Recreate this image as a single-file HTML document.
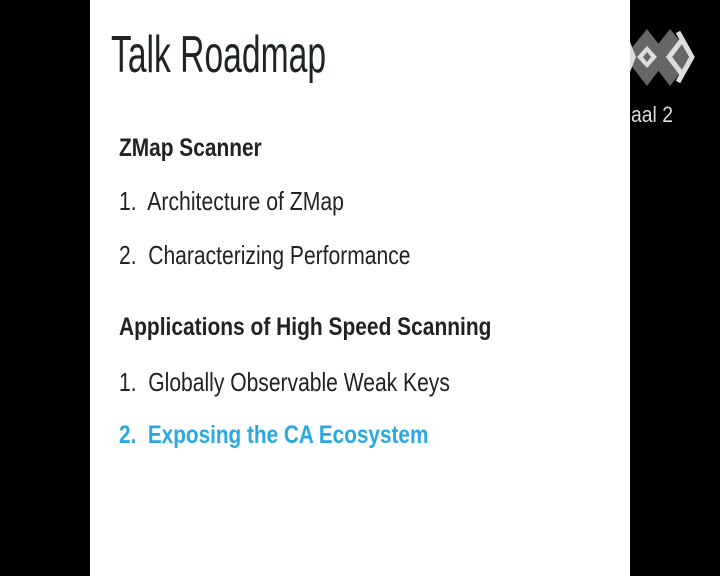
<!DOCTYPE html>
<html><head><style>
body{margin:0;width:720px;height:576px;background:#000;position:relative;overflow:hidden;font-family:"Liberation Sans",sans-serif}
.slide{position:absolute;left:90px;top:0;width:540px;height:576px;background:#fff}
.t{position:absolute;left:0;white-space:nowrap;transform-origin:0 0;color:#222}
</style></head><body>
<div class="slide"></div>
<div class="t" style="left:111px;top:25px;font-size:52px;transform:scaleX(0.647);color:#1e2426">Talk Roadmap</div>
<div class="t" style="left:119px;top:134px;font-size:25px;font-weight:bold;transform:scaleX(0.835)">ZMap Scanner</div>
<div class="t" style="left:119px;top:186px;font-size:26px;transform:scaleX(0.815)">1.&nbsp; Architecture of ZMap</div>
<div class="t" style="left:119px;top:240px;font-size:26px;transform:scaleX(0.81)">2.&nbsp; Characterizing Performance</div>
<div class="t" style="left:119px;top:313px;font-size:25px;font-weight:bold;transform:scaleX(0.838)">Applications of High Speed Scanning</div>
<div class="t" style="left:119px;top:367px;font-size:26px;transform:scaleX(0.81)">1.&nbsp; Globally Observable Weak Keys</div>
<div class="t" style="left:119px;top:421px;font-size:25px;font-weight:bold;transform:scaleX(0.83);color:#2aa8e0">2.&nbsp; Exposing the CA Ecosystem</div>
<svg style="position:absolute;left:630px;top:0" width="90" height="140">
<polygon points="17,29 39,57 17,86 0,64 0,50" fill="#666"/>
<polygon points="40,29 63,57 40,86 18,57" fill="#666"/>
<polygon points="17,46 27,57 17,68 7,57" fill="#ddd"/>
<polygon points="17,52 21,57 17,62 13,57" fill="#666"/>
<polyline points="52,40 39,57 52,74" fill="none" stroke="#ddd" stroke-width="5"/>
<polyline points="48,32 62,57 48,82" fill="none" stroke="#ddd" stroke-width="5"/>
<polygon points="0,42 6,57 0,72" fill="#ddd"/>
<text x="1" y="122" font-family="Liberation Sans" font-size="22" fill="#ddd" textLength="42" lengthAdjust="spacingAndGlyphs">aal 2</text>
</svg>
</body></html>
